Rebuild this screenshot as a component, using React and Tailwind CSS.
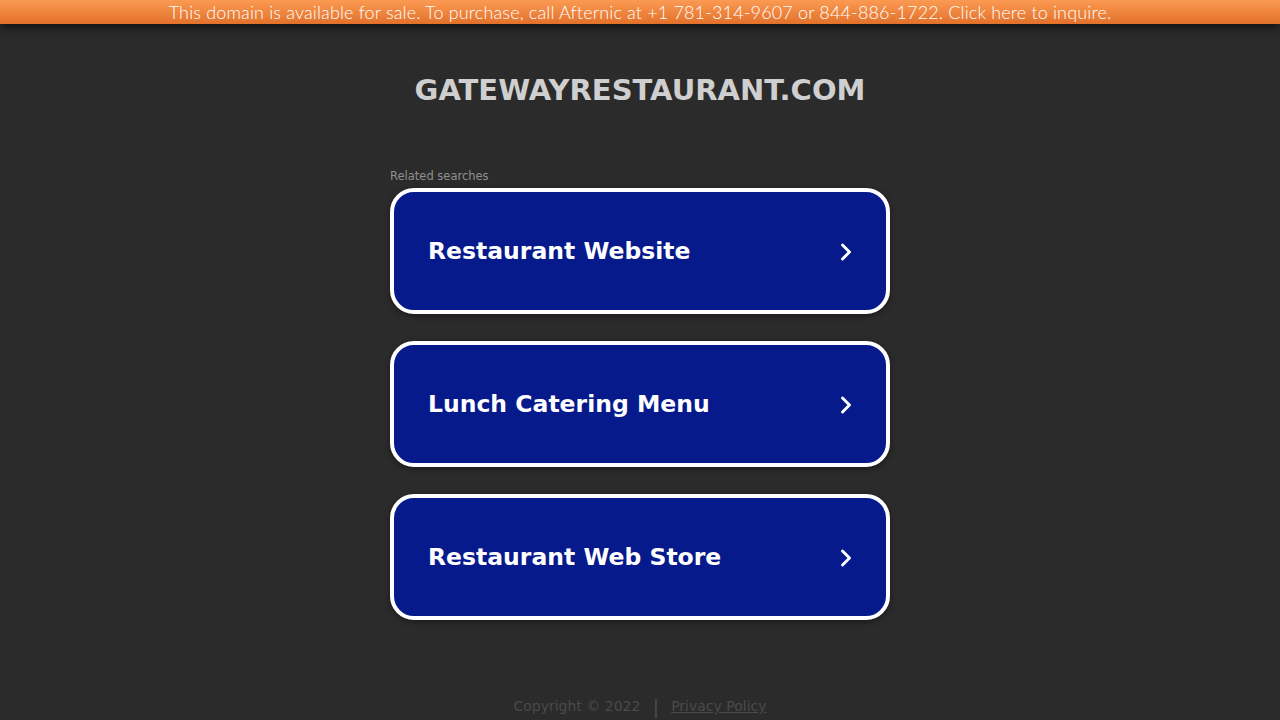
import { ChevronRight } from 'lucide-react';

const searches = ['Restaurant Website', 'Lunch Catering Menu', 'Restaurant Web Store'];

export default function App() {
  return (
    <div className="min-h-screen bg-[#2b2b2b] font-['DejaVu_Sans',sans-serif]">
      <div className="relative z-10 h-6 bg-gradient-to-b from-[#fb9a52] to-[#e2712a] text-center shadow-[0_4px_8px_rgba(0,0,0,0.55)]">
        <a className="font-['Lato',sans-serif] text-[18px] font-light leading-6 text-white tracking-[0.15px]">
          This domain is available for sale. To purchase, call Afternic at +1 781-314-9607 or 844-886-1722. Click here to inquire.
        </a>
      </div>

      <div className="mx-auto w-[500px]">
        <h1 className="pt-[46px] text-center text-[29px] font-bold leading-[40px] text-[#cfcfcf]">
          GATEWAYRESTAURANT.COM
        </h1>

        <div className="mt-[59px] text-[11.5px] leading-[14px] text-[#8f8f8f]">
          Related searches
        </div>

        <div className="mt-[5px] flex flex-col gap-[27px]">
          {searches.map((s) => (
            <a
              key={s}
              className="flex h-[126px] items-center justify-between rounded-[24px] border-4 border-white bg-[#061a8c] pl-[34px] pr-[26px] pt-[2px] shadow-[0_2px_6px_rgba(0,0,0,0.4)]"
            >
              <span className="text-[23.5px] font-bold text-white">{s}</span>
              <ChevronRight className="h-7 w-7 text-white" strokeWidth={2.5} />
            </a>
          ))}
        </div>

        <div className="mt-[76px] flex items-center justify-center gap-3 text-[14px] text-[#4a4a4a]">
          <span>Copyright © 2022</span>
          <span className="text-[20px] leading-none">|</span>
          <span className="underline">Privacy Policy</span>
        </div>
      </div>
    </div>
  );
}
